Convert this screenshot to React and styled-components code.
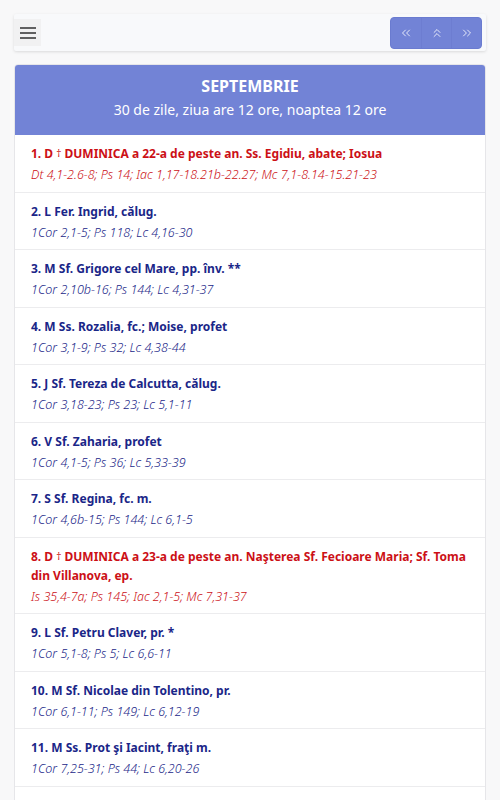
import React from 'react';
import styled, { createGlobalStyle } from 'styled-components';
import { ChevronsLeft, ChevronsUp, ChevronsRight } from 'lucide-react';

const GlobalStyle = createGlobalStyle`
  html, body {
    margin: 0;
    padding: 0;
    background: #f8f8f9;
    font-family: "Noto Sans", "Open Sans", sans-serif;
  }
`;

const Page = styled.div`
  padding: 14px 14px 0;
  display: flex;
  flex-direction: column;
  gap: 13px;
`;

const Navbar = styled.nav`
  height: 37px;
  background: #f8f9fb;
  box-shadow: 0 1px 3px rgba(0, 0, 0, 0.12);
  border-radius: 2px;
  display: flex;
  align-items: center;
  justify-content: space-between;
  padding-right: 4px;
`;

const MenuButton = styled.button`
  width: 27px;
  height: 27px;
  border: none;
  background: #f1f1f2;
  padding: 0;
  display: flex;
  align-items: center;
  justify-content: center;
  cursor: pointer;
`;

const NavGroup = styled.div`
  display: flex;
  height: 30px;
  border-radius: 4px;
  overflow: hidden;
  background: #7283d6;
  border: 1px solid #6a7bd0;
`;

const NavButton = styled.button`
  width: 30px;
  border: none;
  background: transparent;
  color: #fff;
  padding: 0;
  display: flex;
  align-items: center;
  justify-content: center;
  & + & {
    border-left: 1px solid rgba(90, 105, 190, 0.2);
  }
`;

const Card = styled.section`
  background: #fff;
  border: 1px solid #e6e6e9;
  border-radius: 4px;
  overflow: hidden;
`;

const CardHeader = styled.header`
  background: #7283d6;
  color: #fff;
  text-align: center;
  padding: 9px 10px 13px;
`;

const Month = styled.div`
  font-weight: 700;
  font-size: 16px;
  line-height: 24px;
`;

const MonthInfo = styled.div`
  font-size: 14px;
  line-height: 24px;
`;

const Row = styled.div`
  padding: 9px 16px 6.5px;
  border-top: ${({ $first }) => ($first ? 'none' : '1px solid #ececee')};
  color: ${({ $feast }) => ($feast ? '#cc1016' : '#1a2688')};
`;

const Title = styled.div`
  font-weight: 700;
  font-size: 12px;
  line-height: 19px;
`;

const Dagger = styled.span`
  font-size: 10px;
  font-weight: 400;
  vertical-align: 1px;
`;

const Readings = styled.div`
  font-style: italic;
  font-weight: 300;
  font-size: 12.5px;
  line-height: 20px;
  margin-top: 2px;
`;

const days = [
  { n: '1. D', t: 'DUMINICA a 22-a de peste an. Ss. Egidiu, abate; Iosua', r: 'Dt 4,1-2.6-8; Ps 14; Iac 1,17-18.21b-22.27; Mc 7,1-8.14-15.21-23', f: true },
  { n: '2. L', t: 'Fer. Ingrid, călug.', r: '1Cor 2,1-5; Ps 118; Lc 4,16-30' },
  { n: '3. M', t: 'Sf. Grigore cel Mare, pp. înv. **', r: '1Cor 2,10b-16; Ps 144; Lc 4,31-37' },
  { n: '4. M', t: 'Ss. Rozalia, fc.; Moise, profet', r: '1Cor 3,1-9; Ps 32; Lc 4,38-44' },
  { n: '5. J', t: 'Sf. Tereza de Calcutta, călug.', r: '1Cor 3,18-23; Ps 23; Lc 5,1-11' },
  { n: '6. V', t: 'Sf. Zaharia, profet', r: '1Cor 4,1-5; Ps 36; Lc 5,33-39' },
  { n: '7. S', t: 'Sf. Regina, fc. m.', r: '1Cor 4,6b-15; Ps 144; Lc 6,1-5' },
  { n: '8. D', t: 'DUMINICA a 23-a de peste an. Naşterea Sf. Fecioare Maria; Sf. Toma din Villanova, ep.', r: 'Is 35,4-7a; Ps 145; Iac 2,1-5; Mc 7,31-37', f: true },
  { n: '9. L', t: 'Sf. Petru Claver, pr. *', r: '1Cor 5,1-8; Ps 5; Lc 6,6-11' },
  { n: '10. M', t: 'Sf. Nicolae din Tolentino, pr.', r: '1Cor 6,1-11; Ps 149; Lc 6,12-19' },
  { n: '11. M', t: 'Ss. Prot şi Iacint, fraţi m.', r: '1Cor 7,25-31; Ps 44; Lc 6,20-26' },
  { n: '12. J', t: 'Preasfântul Nume al Mariei', r: '1Cor 8,1b-7.11-13; Ps 138; Lc 6,27-38' },
];

function Hamburger() {
  return (
    <svg width="16" height="12" viewBox="0 0 16 12">
      <g stroke="#111" strokeWidth="1.3">
        <line x1="0" y1="1" x2="16" y2="1" />
        <line x1="0" y1="6" x2="16" y2="6" />
        <line x1="0" y1="11" x2="16" y2="11" />
      </g>
    </svg>
  );
}

export default function App() {
  return (
    <>
      <GlobalStyle />
      <Page>
        <Navbar>
          <MenuButton aria-label="meniu">
            <Hamburger />
          </MenuButton>
          <NavGroup>
            <NavButton aria-label="luna anterioară">
              <ChevronsLeft size={14} strokeWidth={1.4} />
            </NavButton>
            <NavButton aria-label="sus">
              <ChevronsUp size={14} strokeWidth={1.4} />
            </NavButton>
            <NavButton aria-label="luna următoare">
              <ChevronsRight size={14} strokeWidth={1.4} />
            </NavButton>
          </NavGroup>
        </Navbar>
        <Card>
          <CardHeader>
            <Month>SEPTEMBRIE</Month>
            <MonthInfo>30 de zile, ziua are 12 ore, noaptea 12 ore</MonthInfo>
          </CardHeader>
          {days.map((d, i) => (
            <Row key={d.n} $first={i === 0} $feast={d.f}>
              <Title>
                {d.n} {d.f && <><Dagger>†</Dagger> </>}{d.t}
              </Title>
              <Readings>{d.r}</Readings>
            </Row>
          ))}
        </Card>
      </Page>
    </>
  );
}
